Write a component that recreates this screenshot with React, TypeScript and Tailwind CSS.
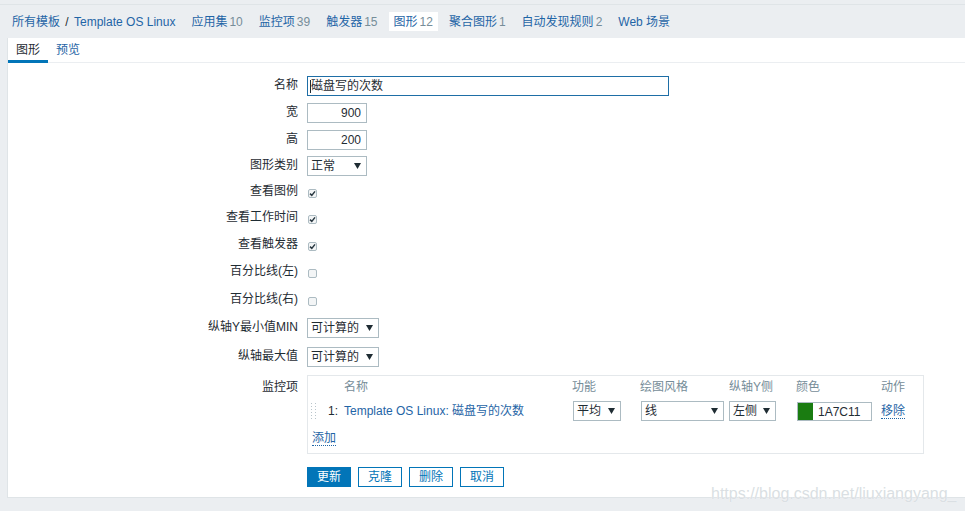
import React from 'react';

const font = "font-['Liberation_Sans','Noto_Sans_CJK_SC',sans-serif]";

// breadcrumb / host navigation items
const navItems = [
  { label: '应用集', count: '10' },
  { label: '监控项', count: '39' },
  { label: '触发器', count: '15' },
  { label: '图形', count: '12', active: true },
  { label: '聚合图形', count: '1' },
  { label: '自动发现规则', count: '2' },
  { label: 'Web 场景', count: '' },
];

const Arrow = () => (
  <svg width="7" height="6" viewBox="0 0 7 6" className="shrink-0">
    <path d="M0 0H7L3.5 6Z" fill="#1f2c33" />
  </svg>
);

const Select = ({ value, width }: { value: string; width: string }) => (
  <div
    className={`${width} h-[20px] flex items-center justify-between border border-[#acbbc2] bg-white pl-[3px] pr-[5px] text-[12px] text-[#1f2c33]`}
  >
    <span>{value}</span>
    <Arrow />
  </div>
);

const Checkbox = ({ checked }: { checked?: boolean }) => (
  <span className="ml-[1px] mt-[3px] w-[9px] h-[9px] rounded-[2px] border border-[#acbbc2] bg-[#f3f5f6] flex items-center justify-center">
    {checked && (
      <svg width="7" height="7" viewBox="0 0 7 7">
        <path d="M1 3.6L2.8 5.4L6 1.4" stroke="#2a3942" strokeWidth="1.5" fill="none" />
      </svg>
    )}
  </span>
);

const TextInput = ({ value, width, right }: { value: string; width: string; right?: boolean }) => (
  <div
    className={`${width} h-[20px] flex items-center border border-[#acbbc2] bg-white px-[5px] text-[12px] text-[#1f2c33] ${right ? 'justify-end' : ''}`}
  >
    {value}
  </div>
);

const Row = ({ label, h, children }: { label: string; h: string; children: React.ReactNode }) => (
  <div className={`flex items-center ${h}`}>
    <div className="w-[290px] text-right text-[12px] text-[#1f2c33] -mt-[2px]">{label}</div>
    <div className="ml-[9px] flex items-center">{children}</div>
  </div>
);

const DragHandle = () => (
  <svg width="6" height="16" viewBox="0 0 6 16">
    {[0, 3, 6, 9, 12, 15].map((y) =>
      [0, 4].map((x) => <rect key={`${x}-${y}`} x={x} y={y} width="1" height="1" fill="#b9c5cb" />)
    )}
  </svg>
);

export default function App() {
  return (
    <div className={`${font} relative w-[965px] h-[511px] overflow-hidden bg-[#ebeef1] text-[12px]`}>
      <div className="h-[5px] border-b border-[#dfe4e7]" />

      {/* host navigation */}
      <div className="h-[33px] flex items-center pl-[7px]">
        <span className="px-[5px] text-[#1f65a6]">
          所有模板 <span className="text-[#1f2c33] px-[2px]">/</span> Template OS Linux
        </span>
        {navItems.map((item) => (
          <span
            key={item.label}
            className={`ml-[6px] px-[5px] h-[19px] flex items-center text-[#1f65a6] ${item.active ? 'bg-white' : ''}`}
          >
            {item.label}
            {item.count && <span className="text-[#768d99] ml-[2px]">{item.count}</span>}
          </span>
        ))}
      </div>

      {/* main panel */}
      <div className="ml-[7px] h-[460px] bg-white border-l border-b border-[#dfe4e7]">
        <div className="h-[25px] flex items-end border-b border-[#ebeef1]">
          <div className="w-[40px] h-[25px] flex items-center justify-center border-b-[3px] border-[#0275b8] text-[#1f2c33] pt-[1px] -mb-[1px]">
            图形
          </div>
          <div className="h-[25px] flex items-center ml-[8px] text-[#1f65a6] pt-[1px]">预览</div>
        </div>

        <div className="pt-[10px]">
          <Row label="名称" h="h-[26px]">
            <div className="w-[362px] h-[20px] flex items-center border border-[#1e6ea6] bg-white pl-[2px] text-[#1f2c33]">
              <span className="w-[1px] h-[13px] bg-[#1f2c33]" />
              磁盘写的次数
            </div>
          </Row>
          <Row label="宽" h="h-[27px]">
            <TextInput value="900" width="w-[60px]" right />
          </Row>
          <Row label="高" h="h-[27px]">
            <TextInput value="200" width="w-[60px]" right />
          </Row>
          <Row label="图形类别" h="h-[26px]">
            <Select value="正常" width="w-[60px]" />
          </Row>
          <Row label="查看图例" h="h-[25px]">
            <Checkbox checked />
          </Row>
          <Row label="查看工作时间" h="h-[27px]">
            <Checkbox checked />
          </Row>
          <Row label="查看触发器" h="h-[27px]">
            <Checkbox checked />
          </Row>
          <Row label="百分比线(左)" h="h-[28px]">
            <Checkbox />
          </Row>
          <Row label="百分比线(右)" h="h-[27px]">
            <Checkbox />
          </Row>
          <Row label="纵轴Y最小值MIN" h="h-[30px]">
            <Select value="可计算的" width="w-[72px]" />
          </Row>
          <Row label="纵轴最大值" h="h-[27px]">
            <Select value="可计算的" width="w-[72px]" />
          </Row>

          {/* items table */}
          <div className="flex mt-[5px]">
            <div className="w-[290px] text-right text-[#1f2c33] pt-[3px]">监控项</div>
            <div className="ml-[9px] w-[617px] border border-[#e4e8eb] pt-[1px] pb-[5px]">
              <div className="grid grid-cols-[36px_228px_68px_89px_67px_85px_1fr] h-[20px] items-center text-[#768d99]">
                <span />
                <span>名称</span>
                <span>功能</span>
                <span>绘图风格</span>
                <span>纵轴Y侧</span>
                <span>颜色</span>
                <span>动作</span>
              </div>
              <div className="grid grid-cols-[36px_228px_68px_89px_67px_85px_1fr] h-[21px] mt-[3px] items-center">
                <span className="flex items-center pl-[3px]">
                  <DragHandle />
                  <span className="ml-[11px] text-[#1f2c33]">1:</span>
                </span>
                <span className="text-[#1f65a6]">Template OS Linux: 磁盘写的次数</span>
                <span className="pl-[1px]">
                  <Select value="平均" width="w-[48px]" />
                </span>
                <span className="pl-[1px]">
                  <Select value="线" width="w-[83px]" />
                </span>
                <span>
                  <Select value="左侧" width="w-[47px]" />
                </span>
                <span className="pl-[1px]">
                  <div className="w-[75px] h-[19px] mt-[2px] flex items-center border border-[#acbbc2] bg-white">
                    <span className="w-[15px] h-[17px] bg-[#1a7c11]" />
                    <span className="ml-[5px] text-[#1f2c33]">1A7C11</span>
                  </div>
                </span>
                <span>
                  <span className="text-[#1f65a6] border-b border-dotted border-[#1f65a6]">移除</span>
                </span>
              </div>
              <div className="h-[20px] mt-[7px] pl-[4px] flex items-center">
                <span className="text-[#1f65a6] border-b border-dotted border-[#1f65a6] leading-[14px]">添加</span>
              </div>
            </div>
          </div>

          {/* actions */}
          <div className="flex mt-[13px] ml-[299px] gap-[7px]">
            <button className="w-[44px] h-[20px] bg-[#0275b8] border border-[#0275b8] text-white text-[12px]">
              更新
            </button>
            <button className="w-[44px] h-[20px] bg-white border border-[#0275b8] text-[#0275b8] text-[12px]">
              克隆
            </button>
            <button className="w-[44px] h-[20px] bg-white border border-[#0275b8] text-[#0275b8] text-[12px]">
              删除
            </button>
            <button className="w-[44px] h-[20px] bg-white border border-[#0275b8] text-[#0275b8] text-[12px]">
              取消
            </button>
          </div>
        </div>
      </div>

      {/* watermark */}
      <div className="absolute left-[711px] top-[482px] text-[16px] text-[#dadfe3] [text-shadow:0_0_1px_#ffffff]">
        https://blog.csdn.net/liuxiangyang_
      </div>
    </div>
  );
}
